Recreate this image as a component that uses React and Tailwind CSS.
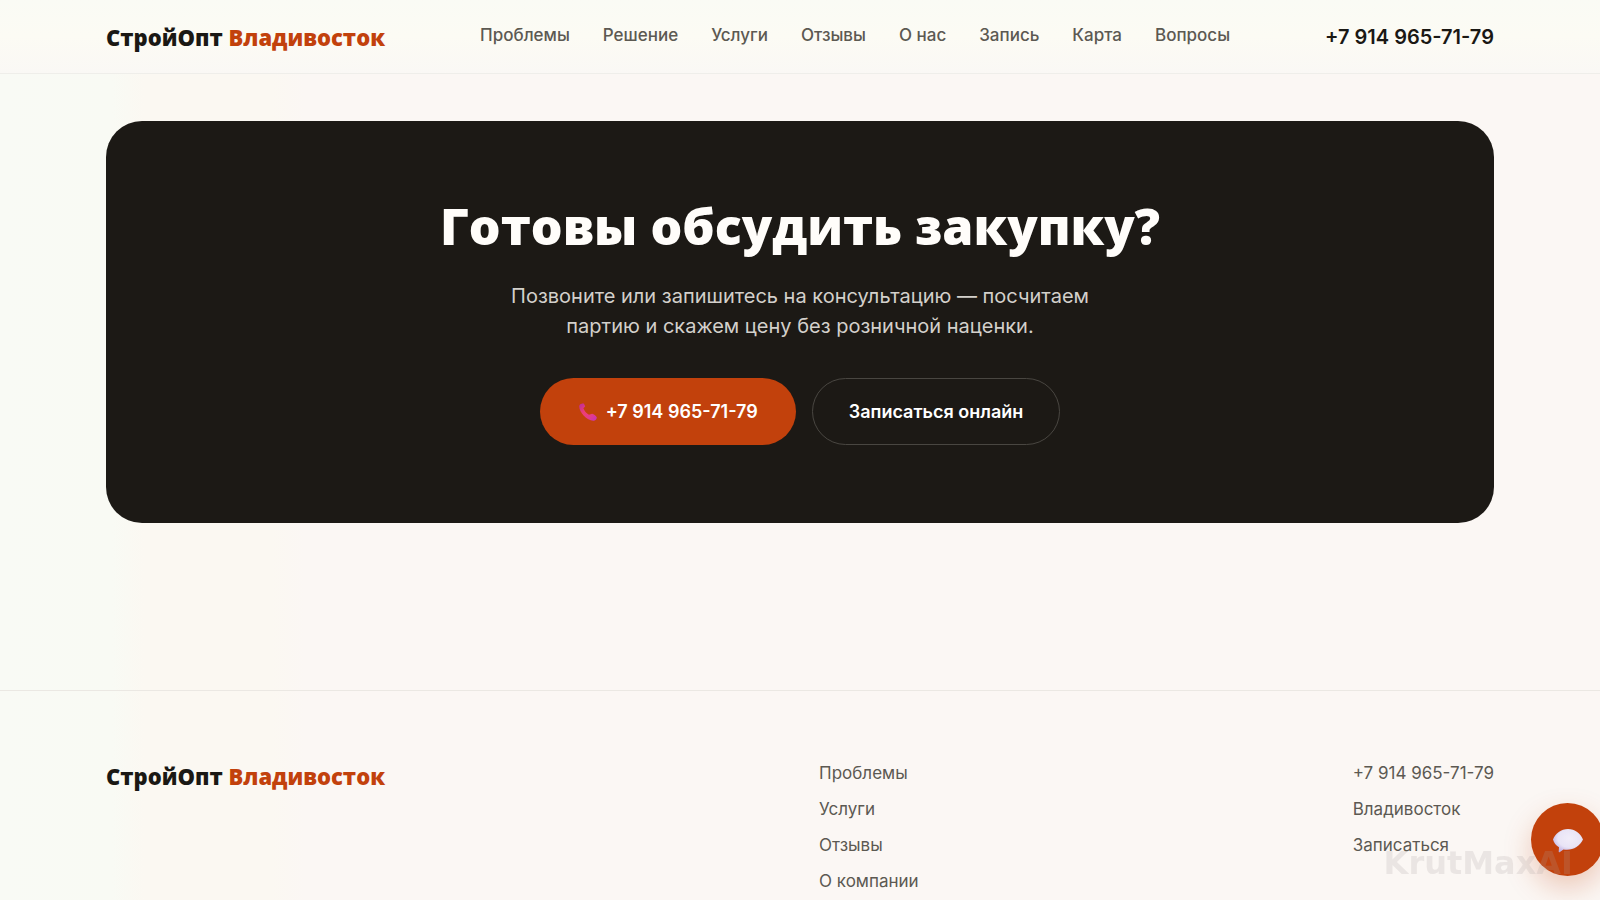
import React from 'react';

const navLinks = [
  { label: 'Проблемы', href: '#problems' },
  { label: 'Решение', href: '#solution' },
  { label: 'Услуги', href: '#services' },
  { label: 'Отзывы', href: '#reviews' },
  { label: 'О нас', href: '#about' },
  { label: 'Запись', href: '#booking' },
  { label: 'Карта', href: '#map' },
  { label: 'Вопросы', href: '#faq' },
];

const footerLinks = [
  { label: 'Проблемы', href: '#problems' },
  { label: 'Услуги', href: '#services' },
  { label: 'Отзывы', href: '#reviews' },
  { label: 'О компании', href: '#about' },
];

const contactLinks = [
  { label: '+7 914 965-71-79', href: 'tel:+79149657179' },
  { label: 'Владивосток', href: '#map' },
  { label: 'Записаться', href: '#booking' },
];

function Logo() {
  return (
    <a href="#top" className="font-['Open_Sans',sans-serif] text-[22px] leading-[30px] font-extrabold whitespace-nowrap text-[#1a1814]">
      СтройОпт <span className="text-[#c2410c]">Владивосток</span>
    </a>
  );
}

function PhoneIcon() {
  return (
    <svg viewBox="0 0 20 20" className="h-5 w-5" aria-hidden="true">
      <defs>
        <linearGradient id="phone" x1="0" y1="0" x2="1" y2="1">
          <stop offset="0" stopColor="#b92aa0" />
          <stop offset="0.4" stopColor="#ee3f75" />
          <stop offset="0.7" stopColor="#e23b8c" />
          <stop offset="1" stopColor="#c233c0" />
        </linearGradient>
      </defs>
      <path
        d="M2.200 2.300 5.300 1.200C6.300 2.100 7 3.300 7.200 4.600L5.400 6.300C6.200 8.800 8.300 11.300 11 12.800L14.200 11.800C16 12.300 17.600 13.600 18.800 15.200 18.800 17 17.700 18.300 16 18.700 12.500 19 8.700 17 5.800 13.800 3.200 11 1.300 7.300 1.200 4.500 1.200 3.600 1.500 2.800 2.200 2.300z"
        fill="url(#phone)"
      />
    </svg>
  );
}

function BubbleIcon() {
  return (
    <svg viewBox="0 0 32 26" className="h-[26px] w-8" aria-hidden="true">
      <defs>
        <radialGradient id="bubble" cx="0.55" cy="0.4" r="0.65">
          <stop offset="0" stopColor="#f1edf9" />
          <stop offset="0.6" stopColor="#e9e4f6" />
          <stop offset="1" stopColor="#b9a9e0" />
        </radialGradient>
      </defs>
      <path
        d="M16 2C23 2 28.500 6.500 31 12.500 28 19 22 22.800 15 22.800c-1.300 0-2.500-.1-3.600-.4L7.600 25.200c-.6.3-1-.1-.9-.7l.3-4.200C4 18.500 1.800 15.800 1 12.500 3.500 6.500 9 2 16 2z"
        fill="url(#bubble)"
      />
    </svg>
  );
}

function Header() {
  return (
    <header className="border-b border-[#efeeea] bg-linear-to-b from-[#fafbf5] via-[#fcfbf4] to-[#faf8f5]">
      <div className="mx-auto flex h-[73px] max-w-[1388px] items-center justify-between">
        <Logo />
        <nav className="flex gap-[33px] pb-1">
          {navLinks.map(link => (
            <a key={link.href} href={link.href} className="text-[17px] leading-6 font-medium whitespace-nowrap text-[#5c5952]">
              {link.label}
            </a>
          ))}
        </nav>
        <a href="tel:+79149657179" className="text-[20px] leading-6 font-semibold whitespace-nowrap text-[#1a1814]">
          +7 914 965-71-79
        </a>
      </div>
    </header>
  );
}

function CallToAction() {
  return (
    <section className="mx-auto mt-[47px] mb-[167px] flex max-w-[1388px] flex-col items-center rounded-[36px] bg-[#1c1915] px-8 pt-20 pb-[78px] text-center">
      <h2 className="font-['Open_Sans',sans-serif] text-[50px] leading-[50px] font-extrabold text-[#fffdfa]">
        Готовы обсудить закупку?
      </h2>
      <p className="mt-[30px] max-w-[600px] text-[20px] leading-[30px] text-[#d3d0cb]">
        Позвоните или запишитесь на консультацию — посчитаем партию и скажем цену без розничной наценки.
      </p>
      <div className="mt-[37px] flex gap-4">
        <a
          href="tel:+79149657179"
          className="flex h-[67px] items-center gap-2 rounded-full bg-[#c2410c] px-[38px] text-[18px] font-semibold text-white"
        >
          <PhoneIcon />
          +7 914 965-71-79
        </a>
        <a
          href="#booking"
          className="flex h-[67px] items-center rounded-full border border-[#494641] px-9 text-[18px] font-semibold text-white"
        >
          Записаться онлайн
        </a>
      </div>
    </section>
  );
}

function FooterColumn({ links }) {
  return (
    <ul className="flex flex-col gap-3">
      {links.map(link => (
        <li key={link.label} className="leading-6">
          <a href={link.href} className="text-[17px] text-[#5c5952]">
            {link.label}
          </a>
        </li>
      ))}
    </ul>
  );
}

function Footer() {
  return (
    <footer className="border-t border-[#ebe8e3] pt-[70px]">
      <div className="mx-auto flex max-w-[1388px] items-start justify-between">
        <Logo />
        <FooterColumn links={footerLinks} />
        <FooterColumn links={contactLinks} />
      </div>
    </footer>
  );
}

function App() {
  return (
    <div
      id="top"
      className="min-h-screen bg-[linear-gradient(to_right,#f9faf5_0%,#f9faf4_7%,#fbf8f2_9%,#fbf8f2_17%,#fbf7f4_19%,#fbf7f4_100%)] font-['Inter',sans-serif]"
    >
      <Header />
      <main>
        <CallToAction />
      </main>
      <Footer />

      <button
        type="button"
        aria-label="Открыть чат"
        className="fixed -right-1 bottom-6 flex h-[73px] w-[73px] items-center justify-center rounded-full bg-[#c2410c] shadow-[0_12px_28px_rgba(194,65,12,0.25)]"
      >
        <BubbleIcon />
      </button>
      <span className="pointer-events-none fixed right-[27px] bottom-[17px] font-['DejaVu_Sans',sans-serif] text-[32px] leading-10 font-bold text-[#a8a29e]/20">
        KrutMaxAI
      </span>
    </div>
  );
}

export default App;
